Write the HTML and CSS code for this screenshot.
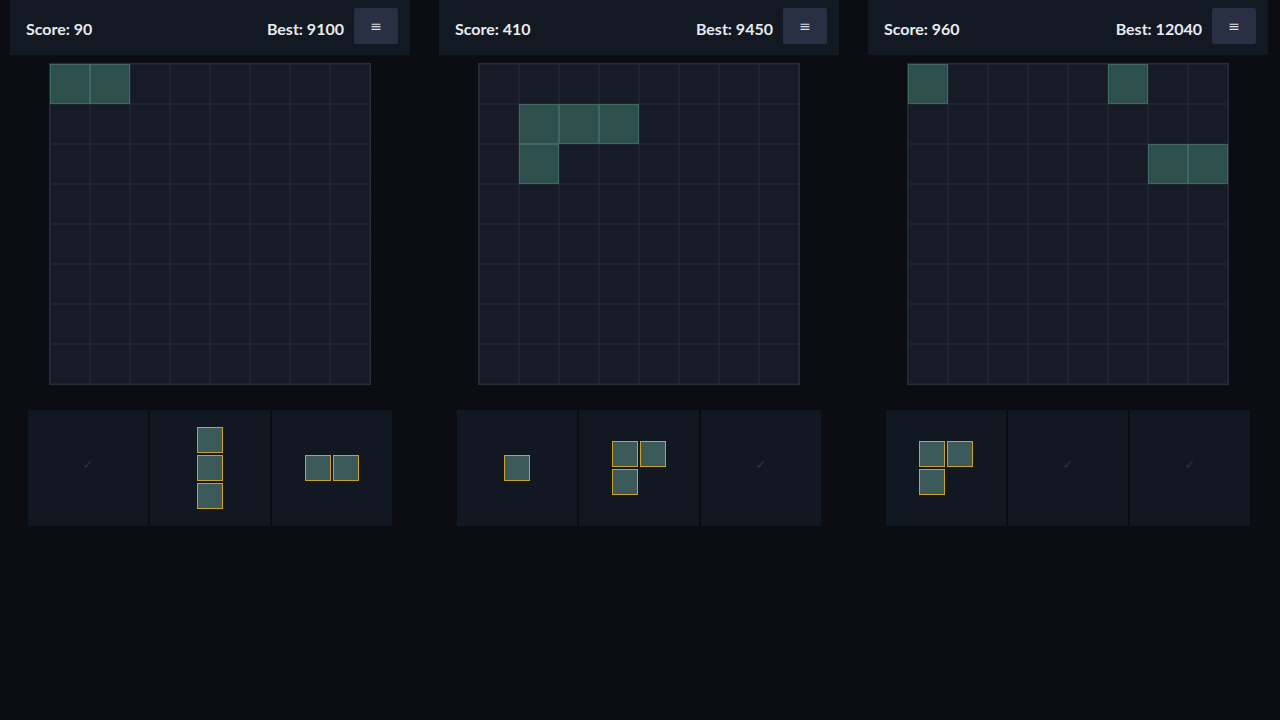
FILE: index.html
```html
<!DOCTYPE html>
<html lang="en">
<head>
    <meta charset="UTF-8">
    <meta name="viewport" content="width=device-width, initial-scale=1.0">
    <title>Block Puzzle</title>
    <link rel="stylesheet" href="styles.css">
</head>
<body>

    <div class="games">

        <!-- Game 1 -->
        <div class="game">
            <div class="top-bar">
                <span class="score">Score: 90</span>
                <span class="best">Best: 9100</span>
                <button class="menu-btn">&#8801;</button>
            </div>
            <div class="board" data-filled="0,1"></div>
            <div class="tray">
                <div class="slot"><span class="done">&#10003;</span></div>
                <div class="slot"><div class="piece" data-shape="0,0;1,0;2,0"></div></div>
                <div class="slot"><div class="piece" data-shape="0,0;0,1"></div></div>
            </div>
        </div>

        <!-- Game 2 -->
        <div class="game">
            <div class="top-bar">
                <span class="score">Score: 410</span>
                <span class="best">Best: 9450</span>
                <button class="menu-btn">&#8801;</button>
            </div>
            <div class="board" data-filled="9,10,11,17"></div>
            <div class="tray">
                <div class="slot"><div class="piece" data-shape="0,0"></div></div>
                <div class="slot"><div class="piece" data-shape="0,0;0,1;1,0"></div></div>
                <div class="slot"><span class="done">&#10003;</span></div>
            </div>
        </div>

        <!-- Game 3 -->
        <div class="game">
            <div class="top-bar">
                <span class="score">Score: 960</span>
                <span class="best">Best: 12040</span>
                <button class="menu-btn">&#8801;</button>
            </div>
            <div class="board" data-filled="0,5,22,23"></div>
            <div class="tray">
                <div class="slot"><div class="piece" data-shape="0,0;0,1;1,0"></div></div>
                <div class="slot"><span class="done">&#10003;</span></div>
                <div class="slot"><span class="done">&#10003;</span></div>
            </div>
        </div>

    </div>

    <script>
        // Build the 8x8 boards
        var boards = document.querySelectorAll('.board');
        boards.forEach(function (board) {
            var filled = board.dataset.filled.split(',').map(Number);
            for (var i = 0; i < 64; i++) {
                var cell = document.createElement('div');
                cell.className = filled.indexOf(i) >= 0 ? 'cell filled' : 'cell';
                board.appendChild(cell);
            }
        });

        // Build the pieces in the tray
        var pieces = document.querySelectorAll('.piece');
        pieces.forEach(function (piece) {
            var blocks = piece.dataset.shape.split(';');
            var rows = 0, cols = 0;
            blocks.forEach(function (b) {
                var rc = b.split(',').map(Number);
                rows = Math.max(rows, rc[0] + 1);
                cols = Math.max(cols, rc[1] + 1);
            });
            piece.style.gridTemplateRows = 'repeat(' + rows + ', 26px)';
            piece.style.gridTemplateColumns = 'repeat(' + cols + ', 26px)';
            blocks.forEach(function (b) {
                var rc = b.split(',').map(Number);
                var block = document.createElement('div');
                block.className = 'block';
                block.style.gridRow = rc[0] + 1;
                block.style.gridColumn = rc[1] + 1;
                piece.appendChild(block);
            });
        });
    </script>

</body>
</html>
```

FILE: styles.css
```css
/* Block Puzzle - dark theme */
body {
    margin: 0;
    background-color: #0b0d12;
    font-family: 'Lato', 'Noto Sans', sans-serif;
    color: #e6e8ec;
}

.games {
    display: flex;
    gap: 29px;
    padding-left: 10px;
}

.game {
    width: 400px;
    display: flex;
    flex-direction: column;
    align-items: center;
}

/* Score bar */
.top-bar {
    width: 100%;
    box-sizing: border-box;
    height: 55px;
    display: flex;
    align-items: center;
    padding: 0 12px 3px 16px;
    background-color: #121923;
}

.score,
.best {
    font-size: 16px;
    font-weight: 700;
    color: #e8eaee;
    margin-top: 4px;
}

.score {
    flex: 1;
}

.menu-btn {
    width: 44px;
    height: 36px;
    margin-left: 10px;
    border: none;
    border-radius: 2px;
    background-color: #2a3043;
    color: #d8dbe2;
    font-family: 'DejaVu Sans', sans-serif;
    font-size: 14px;
    padding: 0;
    cursor: pointer;
}

/* 8x8 board */
.board {
    margin-top: 8px;
    display: grid;
    grid-template-columns: repeat(8, 40px);
    grid-template-rows: repeat(8, 40px);
    border: 1px solid #262c38;
    background-color: #161a24;
}

.cell {
    box-sizing: border-box;
    border: 1px solid #1e2430;
    background-color: #171b25;
}

.cell.filled {
    background-color: #2e504d;
    border: 1px solid #3d6864;
}

/* Piece tray */
.tray {
    margin-top: 25px;
    display: flex;
    gap: 2px;
}

.slot {
    width: 120px;
    height: 116px;
    background-color: #121822;
    display: flex;
    align-items: center;
    justify-content: center;
}

.done {
    color: #2c3444;
    font-family: 'DejaVu Sans', sans-serif;
    font-size: 13px;
    margin-top: -8px;
}

.piece {
    display: grid;
    gap: 2px;
}

.block {
    box-sizing: border-box;
    border: 1px solid #c9a227;
    background-color: #3d5a5b;
}
```
